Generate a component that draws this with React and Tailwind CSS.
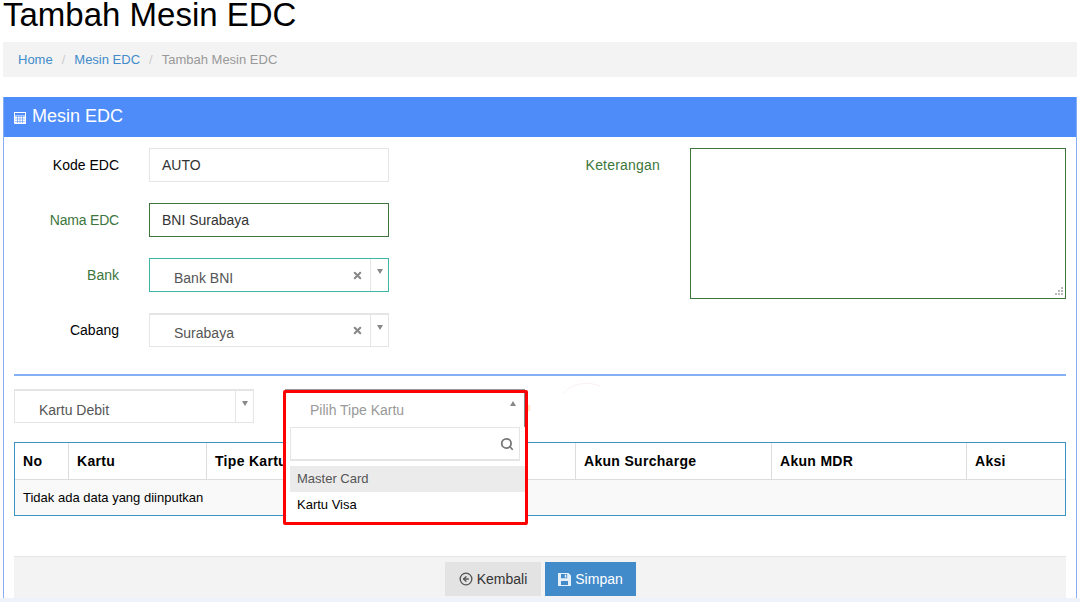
import React from 'react';
import { CircleArrowLeft, Search, X } from 'lucide-react';

function CalcIcon() {
  return (
    <svg width="12" height="12" viewBox="0 0 12 12" className="shrink-0 mt-[4px]">
      <path fill="#fff" d="M0 0h12v12H0z" />
      <path fill="#4d8cf9" d="M1 1h10v2.4H1zM1 4.6h10v.5H1zM1 6.8h10v.5H1zM1 9h10v.5H1zM3 4h.6v7H3zM5.7 4h.6v7h-.6zM8.4 4H9v7h-.6zM0 11.4h.4v.6H0z" />
    </svg>
  );
}

function SaveIcon() {
  return (
    <svg width="13" height="13" viewBox="0 0 13 13" className="shrink-0">
      <path fill="#e6f0fa" d="M0 0h10.5L13 2.5V13H0z" />
      <path fill="#428bca" d="M3 1h6.2v4.2H3zM3 8h7v4H3z" />
      <path fill="#e6f0fa" d="M6.8 1.6h1.5v3H6.8z" />
    </svg>
  );
}

function Caret({ up }) {
  return (
    <span className={`w-0 h-0 border-x-[3px] border-x-transparent ${up ? 'border-b-[5px] border-b-[#888]' : 'border-t-[5px] border-t-[#888]'}`} />
  );
}

function Select({ value, clear, focus, width = 'w-[240px]' }) {
  return (
    <div className={`${width} h-[34px] flex border bg-white ${focus ? 'border-[#3fb5a8]' : 'border-[#e5e5e5] border-t-2'}`}>
      <div className={`flex-1 pl-6 text-[14px] text-[#555] ${focus ? 'pt-[9px]' : clear ? 'pt-[8px]' : 'pt-[9px]'} leading-[20px]`}>{value}</div>
      {clear && (
        <div className="w-[26px] flex items-center justify-center">
          <X size={11} strokeWidth={4.5} className="text-[#888]" />
        </div>
      )}
      <div className="w-[18px] border-l border-[#e5e5e5] flex justify-center pt-[10px]">
        <Caret />
      </div>
    </div>
  );
}

function Field({ label, color = 'text-black', children }) {
  return (
    <div className="flex h-[34px] mb-[21px]">
      <div className={`w-[105px] text-right text-[14px] leading-[34px] ${color}`}>{label}</div>
      <div className="ml-[30px]">{children}</div>
    </div>
  );
}

const cols = [
  ['No', 'w-[54px]'],
  ['Kartu', 'w-[138px]'],
  ['Tipe Kartu', 'w-[185px]'],
  ['', 'w-[184px]'],
  ['Akun Surcharge', 'w-[196px]'],
  ['Akun MDR', 'w-[195px]'],
  ['Aksi', 'flex-1'],
];

export default function App() {
  return (
    <div className="h-[602px] overflow-hidden bg-white font-['Liberation_Sans',Arial,sans-serif] text-[14px] relative">
      <h1 className="h-[42px] pl-[3px] text-[33px] leading-[30px] text-black">Tambah Mesin EDC</h1>
      <div className="mx-[3px] h-[35px] bg-[#f3f3f3] pl-[15px] flex items-center text-[13px] gap-[9px]">
        <span className="text-[#428bca]">Home</span>
        <span className="text-[#ccc]">/</span>
        <span className="text-[#428bca]">Mesin EDC</span>
        <span className="text-[#ccc]">/</span>
        <span className="text-[#999]">Tambah Mesin EDC</span>
      </div>

      <div className="mx-[3px] mt-[20px] h-[520px] border-x border-[#85acf5] bg-white">
        <div className="h-[40px] bg-[#4d8cf9] text-white text-[18px] flex items-center gap-[6px] pl-[10px] pb-[2px]">
          <CalcIcon />
          <span>Mesin EDC</span>
        </div>

        <div className="px-[10px] pt-[11px]">
          <div className="flex h-[226px]">
            <div className="w-[375px]">
              <Field label="Kode EDC">
                <div className="w-[240px] h-[34px] border border-[#e5e5e5] px-3 leading-[32px] text-[#333]">AUTO</div>
              </Field>
              <Field label="Nama EDC" color="text-[#3c763d] tracking-[-0.2px]">
                <div className="w-[240px] h-[34px] border border-[#3c763d] px-3 leading-[32px] tracking-normal text-[#333]">BNI Surabaya</div>
              </Field>
              <Field label="Bank" color="text-[#3c763d]">
                <Select value="Bank BNI" clear focus />
              </Field>
              <Field label="Cabang">
                <Select value="Surabaya" clear />
              </Field>
            </div>
            <div className="flex">
              <div className="w-[271px] text-right leading-[34px] text-[#3c763d] tracking-[0.2px]">Keterangan</div>
              <div className="ml-[30px] w-[376px] h-[151px] border border-[#3c763d] relative">
                <svg width="11" height="9" viewBox="0 0 11 9" className="absolute right-[2px] bottom-[2px]">
                  <path fill="#bbb" d="M9 0h2v2H9zM6 3h2v2H6zM9 3h2v2H9zM3 6h2v2H3zM6 6h2v2H6zM9 6h2v2H9z" />
                </svg>
              </div>
            </div>
          </div>

          <div className="h-[2px] bg-[#85b0f7]" />

          <div className="mt-[13px] h-[53px]">
            <Select value="Kartu Debit" />
          </div>

          <div className="h-[74px] border border-[#3b93c4]">
            <div className="h-[37px] flex border-b border-[#ddd]">
              {cols.map(([name, w], i) => (
                <div key={i} className={`${w} ${i < 6 ? 'border-r border-[#ddd]' : ''} pl-2 font-bold leading-[36px] tracking-[0.3px] text-black`}>{name}</div>
              ))}
            </div>
            <div className="h-[35px] bg-[#f9f9f9] pl-2 text-[13px] leading-[35px] text-black">Tidak ada data yang diinputkan</div>
          </div>

          <div className="mt-[40px] h-[60px] border-t border-[#e5e5e5] bg-[#f3f3f3] flex justify-center gap-[4px] pt-[5px] pl-[1px]">
            <div className="w-[96px] h-[34px] bg-[#e3e3e3] flex items-center justify-center gap-[4px] text-[#333]">
              <CircleArrowLeft size={14} strokeWidth={2.25} className="text-[#555]" />
              Kembali
            </div>
            <div className="w-[91px] h-[34px] bg-[#428bca] flex items-center justify-center gap-[4px] text-white">
              <SaveIcon />
              Simpan
            </div>
          </div>
        </div>
      </div>

      <div className="absolute left-0 right-0 top-[598px] h-[4px] bg-[#eef3fb]" />

      <svg width="40" height="14" viewBox="0 0 40 14" className="absolute left-[562px] top-[381px]">
        <path d="M1 13C8 4 22-1 38 5" fill="none" stroke="#fdf0f1" strokeWidth="1" />
      </svg>
      <div className="absolute left-[528px] top-[405px] w-[2px] h-[6px] bg-[#ffe6bd]" />
      <div className="absolute left-[285px] top-[389px] w-[240px] h-px bg-[#999]" />

      <div className="absolute left-[283px] top-[390px] w-[245px] h-[135px] border-[3px] border-[#f00] rounded-[2px] bg-white">
        <div className="h-[34px] flex border-r border-[#888]">
          <div className="flex-1 pl-[24px] pt-[7px] leading-[20px] text-[#999]">Pilih Tipe Kartu</div>
          <div className="w-[18px] flex justify-center pt-[8px] pr-[5px]"><Caret up /></div>
        </div>
        <div className="ml-[4px] mr-[5px] h-[34px] border border-[#e5e5e5] border-b-2 flex items-center justify-end pr-[5px]">
          <Search size={14} strokeWidth={3} className="text-[#777]" />
        </div>
        <div className="mt-[5px] ml-[4px] h-[26px] bg-[#ebebeb] pl-[7px] text-[13px] leading-[25px] text-[#555]">Master Card</div>
        <div className="ml-[4px] h-[26px] pl-[7px] text-[13px] leading-[26px] text-black">Kartu Visa</div>
      </div>
    </div>
  );
}
